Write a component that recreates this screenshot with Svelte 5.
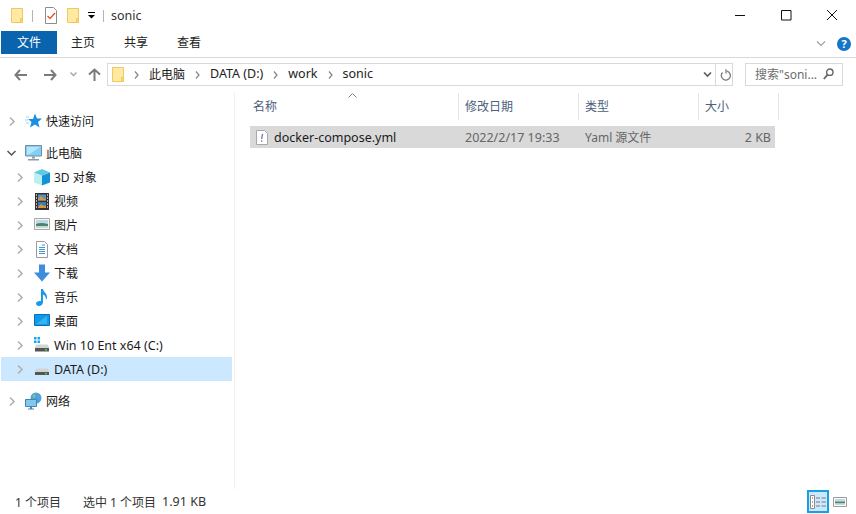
<script>
  const tabs = ['主页', '共享', '查看'];
  const crumbs = [
    { text: '此电脑', cjk: true },
    { text: 'DATA (D:)' },
    { text: 'work' },
    { text: 'sonic' }
  ];
  const places = [
    { label: '3D 对象', icon: 'cube', cjk: true },
    { label: '视频', icon: 'film', cjk: true },
    { label: '图片', icon: 'picture', cjk: true },
    { label: '文档', icon: 'doc', cjk: true },
    { label: '下载', icon: 'down', cjk: true },
    { label: '音乐', icon: 'music', cjk: true },
    { label: '桌面', icon: 'desk', cjk: true },
    { label: 'Win 10 Ent x64 (C:)', icon: 'win' },
    { label: 'DATA (D:)', icon: 'drive', selected: true }
  ];
  const columns = [
    { label: '名称', width: 209 },
    { label: '修改日期', width: 120 },
    { label: '类型', width: 120 },
    { label: '大小', width: 80 }
  ];
</script>

{#snippet folder()}
  <svg class="folder" width="14" height="17" viewBox="0 0 14 17">
    <path d="M1.500 1.500h11v14h-11z" fill="#ffe9a3" stroke="#eec95f" />
    <path d="M10.500 11.500h2v4h-2z" fill="#fbd873" stroke="#eec95f" />
  </svg>
{/snippet}

{#snippet chev()}
  <svg class="chev" width="7" height="11" viewBox="0 0 7 11">
    <path d="M1 1.500l4 4-4 4" fill="none" stroke="currentColor" stroke-width="1.600" />
  </svg>
{/snippet}

{#snippet navicon(kind)}
  <svg class="navicon" width="18" height="18" viewBox="0 0 18 18">
    {#if kind === 'cube'}
      <path d="M1 4.500L9 7.500v10L1 14.500z" fill="#bdeef2" />
      <path d="M9 7.500l8-3v10l-8 3z" fill="#1492d8" />
      <path d="M1 4.500L9 1l8 3.500-8 3z" fill="#5ccbe0" />
    {:else if kind === 'film'}
      <path d="M2 1h14v17H2z" fill="#333" />
      <path d="M5 2.500h8v6H5z" fill="#5a8fc4" />
      <path d="M5 10h8v6H5z" fill="#3f78b8" />
      <path d="M5 7l3-3 3 3 2-1v2.500H5zM5 15l3-3 3 2 2-1v3H5z" fill="#d39a45" />
      <path d="M3 3h1M3 6h1M3 9h1M3 12h1M3 15h1M14 3h1M14 6h1M14 9h1M14 12h1M14 15h1" stroke="#ddd" stroke-width="1.500" />
    {:else if kind === 'picture'}
      <path d="M1.500 2.500h15v11h-15z" fill="#f6f6f6" stroke="#a8a8a8" />
      <path d="M3 4h12v4H3z" fill="#bcd9ea" />
      <path d="M3 8c3-1.500 7-1.500 12 0v2H3z" fill="#4e8464" />
      <path d="M3 10h12v2H3z" fill="#c2d9e2" />
    {:else if kind === 'doc'}
      <path d="M3.500 1.500h8l3 3v13h-11z" fill="#fff" stroke="#9a9a9a" />
      <path d="M9 5h3M6 7.500h6M6 9.500h6M6 11.500h6M6 13.500h6" stroke="#3c9ad8" />
    {:else if kind === 'down'}
      <path d="M6 .5h6v8h5l-8 9-8-9h5z" fill="#3c8ddc" />
    {:else if kind === 'music'}
      <path d="M8 1h2c.3 3 4 4 4 8 0 1-.4 2-1 3 0-3-1-4.500-3-5.500v7.500c0 2.500-2 4-4 4s-3-1-3-2.500 2-3 5-2.500z" fill="#1c97ea" />
    {:else if kind === 'desk'}
      <path d="M1.500 2.500h15v11h-15z" fill="#0f9ae8" stroke="#0b6ec0" />
      <path d="M3 12l11-8v8z" fill="#36b4f2" />
    {:else if kind === 'win'}
      <path d="M1 1h2.500v2.500H1zM4.500 1H7v2.500H4.500zM1 4.500h2.500V7H1zM4.500 4.500H7V7H4.500z" fill="#14a8ef" />
      <path d="M2 12c.3-2.500 1-3.500 2-3.500h10c1 0 1.700 1 2 3.500z" fill="#d4d4d4" />
      <path d="M2 12h14v3.500H2z" fill="#555" />
      <path d="M12 13h2v1.500h-2z" fill="#41d36b" />
    {:else if kind === 'drive'}
      <path d="M2 12c.3-2.500 1-3.500 2-3.500h10c1 0 1.700 1 2 3.500z" fill="#cfd3d6" />
      <path d="M2 12h14v3H2z" fill="#555" />
      <path d="M12 13h2v1.200h-2z" fill="#41d36b" />
    {/if}
  </svg>
{/snippet}

<div class="win">
  <header class="title">
    {@render folder()}
    <i class="bar"></i>
    <svg class="qa-doc" width="14" height="17" viewBox="0 0 14 17">
      <path d="M1.500.500h8l3 3v13h-11z" fill="#fff" stroke="#8d8d8d" />
      <path d="M3.500 9l2.500 2.500L11 6" fill="none" stroke="#e2572b" stroke-width="1.400" />
    </svg>
    <span class="qa-folder">{@render folder()}</span>
    <svg class="qa-drop" width="7" height="7" viewBox="0 0 7 7">
      <path d="M0 .5h7" stroke="#000" />
      <path d="M0 3h7L3.500 6.500z" fill="#000" />
    </svg>
    <i class="bar second"></i>
    <span class="title-text">sonic</span>
    <div class="controls">
      <button aria-label="最小化"><svg width="12" height="12" viewBox="0 0 12 12"><path d="M1 6.500h10" stroke="#111" /></svg></button>
      <button aria-label="最大化"><svg width="12" height="12" viewBox="0 0 12 12"><path d="M1.500 1.500h9.500v9.500H1.500z" fill="none" stroke="#111" /></svg></button>
      <button aria-label="关闭"><svg width="12" height="12" viewBox="0 0 12 12"><path d="M1 1l10 10M11 1L1 11" stroke="#111" /></svg></button>
    </div>
  </header>

  <nav class="ribbon">
    <span class="tab tab-file">文件</span>
    {#each tabs as t}<span class="tab">{t}</span>{/each}
    <svg class="collapse" width="10" height="6" viewBox="0 0 10 6"><path d="M1 .5l4 4 4-4" fill="none" stroke="#a0a0a0" stroke-width="1.200" /></svg>
    <span class="help">?</span>
  </nav>

  <div class="addr">
    <svg class="nav-arrow" width="13" height="12" viewBox="0 0 13 12"><path d="M6 1L1.500 6 6 11M1.500 6H13" fill="none" stroke="#7b7b7b" stroke-width="2" /></svg>
    <svg class="nav-arrow fwd" width="13" height="12" viewBox="0 0 13 12"><path d="M7 1l4.500 5L7 11M11.500 6H0" fill="none" stroke="#7b7b7b" stroke-width="2" /></svg>
    <svg class="recent" width="7" height="5" viewBox="0 0 7 5"><path d="M.5.500l3 3 3-3" fill="none" stroke="#a6a6a6" stroke-width="1.400" /></svg>
    <svg class="up" width="13" height="13" viewBox="0 0 13 13"><path d="M1 6.500l5.500-5 5.500 5M6.500 1.500V13" fill="none" stroke="#7b7b7b" stroke-width="2" /></svg>
    <div class="path">
      {@render folder()}
      {#each crumbs as c}
        <svg class="crumb-chev" width="5" height="8" viewBox="0 0 5 8"><path d="M1 .5l3 3.500-3 3.500" fill="none" stroke="#8a8a8a" stroke-width="1.300" /></svg>
        <span class="crumb" class:latin={!c.cjk}>{c.text}</span>
      {/each}
      <svg class="path-drop" width="9" height="6" viewBox="0 0 9 6"><path d="M1 .5l3.500 3.500L8 .5" fill="none" stroke="#5d5d5d" stroke-width="1.600" /></svg>
      <span class="refresh">
        <svg width="11" height="12" viewBox="0 0 11 12"><path d="M7 2.200A4.500 4.500 0 1 1 2.500 3.500M6 .2v4.300" fill="none" stroke="#7c7c7c" stroke-width="1.300" /></svg>
      </span>
    </div>
    <div class="search">
      <span>搜索"soni...</span>
      <svg width="11" height="12" viewBox="0 0 11 12"><circle cx="6.800" cy="4.200" r="3.200" fill="none" stroke="#666" stroke-width="1.400" /><path d="M4.500 6.800L.8 11" stroke="#666" stroke-width="1.800" /></svg>
    </div>
  </div>

  <div class="main">
    <aside class="side">
      <div class="row top">
        {@render chev()}
        <svg class="navicon" width="18" height="18" viewBox="0 0 18 18"><path d="M10 1.500l2 5h5l-4 3.500 1.500 5.500-4.500-3-5 3 1.500-5.500L3 7h5z" fill="#1b8fdf" /><path d="M1 5h3M0 8h3M1 11h3" stroke="#9fd0ef" /></svg>
        <span>快速访问</span>
      </div>
      <div class="row top pc">
        <svg class="chev open" width="9" height="7" viewBox="0 0 9 7"><path d="M.5 1l4 4 4-4" fill="none" stroke="#555" stroke-width="1.500" /></svg>
        <svg class="navicon" width="18" height="18" viewBox="0 0 18 18"><path d="M.5 1.500h16v10.500H.5z" fill="#7fd0f8" stroke="#7a8b99" /><path d="M2 3h13L4 10.500H2z" fill="#b5e5fb" /><path d="M7 12.500h3v2H7zM3 15h11v1.500H3z" fill="#8a9aa8" /></svg>
        <span>此电脑</span>
      </div>
      {#each places as p}
        <div class="row sub" class:sel={p.selected}>
          {@render chev()}
          {@render navicon(p.icon)}
          <span class:latin={!p.cjk}>{p.label}</span>
        </div>
      {/each}
      <div class="row top net">
        {@render chev()}
        <svg class="navicon" width="18" height="18" viewBox="0 0 18 18"><circle cx="11" cy="6" r="5.500" fill="#4fa3dc" /><path d="M8 3c2-1 3 1 2 2s-3 1-2-2z" fill="#90c67a" /><path d="M.5 7.500h11v7H.5z" fill="#86c7ec" stroke="#3d86bd" /><path d="M5 15h2v1.500H5zM3 16.500h6V17.500H3z" fill="#4d87ad" /></svg>
        <span>网络</span>
      </div>
    </aside>

    <section class="list">
      <span class="sort">
        <svg width="9" height="5" viewBox="0 0 9 5"><path d="M.5 4.500l4-4 4 4" fill="none" stroke="#8a8a8a" /></svg>
      </span>
      <div class="head">
        {#each columns as c}
          <div class="col" style="width: {c.width}px">{c.label}</div>
        {/each}
      </div>
      <div class="item">
        <span class="c-name latin">
          <svg width="12" height="15" viewBox="0 0 12 15"><path d="M.5.500h8l3 3v11H.5z" fill="#fff" stroke="#a8a8a8" /><path d="M6.500 4l-.8 5" stroke="#8a66b8" stroke-width="1.300" /><path d="M5 11h1.200" stroke="#8a66b8" stroke-width="1.300" /></svg>
          docker-compose.yml
        </span>
        <span class="c-date latin">2022/2/17 19:33</span>
        <span class="c-type">Yaml 源文件</span>
        <span class="c-size latin">2 KB</span>
      </div>
    </section>
  </div>

  <footer class="status">
    <span class="count">1 个项目</span>
    <span>选中 1 个项目</span>
    <span class="size latin">1.91 KB</span>
    <div class="views">
      <span class="view on">
        <svg width="16" height="14" viewBox="0 0 16 14"><path d="M.5.500h4v13h-4z" fill="#fff" stroke="#8a8a8a" /><path d="M2 2.500h1v1H2zM2 6.500h1v1H2zM2 10.500h1v1H2z" fill="#a33" /><path d="M6 3h4M11.500 3H16M6 7h4M11.500 7H16M6 11h4M11.500 11H16" stroke="#7d7d7d" /></svg>
      </span>
      <span class="view">
        <svg width="14" height="10" viewBox="0 0 14 10"><path d="M.5.500h13v9H.5z" fill="#fff" stroke="#9b9b9b" /><path d="M2 2h10v2.500H2z" fill="#bcd9ea" /><path d="M2 4.500h10v2H2z" fill="#4e8464" /><path d="M2 6.500h10V8H2z" fill="#c2d9e2" /></svg>
      </span>
    </div>
  </footer>
</div>

<style>
  :global(body) {
    margin: 0;
    background: #fff;
  }
  .win {
    width: 856px;
    height: 514px;
    display: flex;
    flex-direction: column;
    overflow: hidden;
    background: #fff;
    color: #1a1a1a;
    font: 12px "Noto Sans", "Noto Sans CJK SC", sans-serif;
  }
  .latin {
    font-size: 12.5px;
  }
  svg {
    display: block;
    flex: none;
  }
  .title {
    height: 31px;
    display: flex;
    align-items: center;
    padding-left: 10px;
  }
  .bar {
    width: 1px;
    height: 12px;
    background: #b4b4b4;
    margin-left: 8px;
  }
  .qa-doc {
    margin-left: 11px;
  }
  .qa-folder {
    margin-left: 8px;
  }
  .qa-drop {
    margin-left: 8px;
  }
  .bar.second {
    margin-left: 8px;
  }
  .title-text {
    margin-left: 7px;
    font-size: 12.5px;
    color: #333;
  }
  .controls {
    margin-left: auto;
    display: flex;
    padding-right: 1px;
    align-self: flex-start;
    padding-top: 3px;
  }
  .controls button {
    width: 46px;
    height: 24px;
    padding: 0;
    border: 0;
    background: none;
    display: flex;
    align-items: center;
    justify-content: center;
  }
  .ribbon {
    height: 27px;
    box-sizing: border-box;
    display: flex;
    align-items: flex-start;
    gap: 1px;
    padding-left: 1px;
    border-bottom: 1px solid #d9d9d9;
  }
  .tab {
    height: 23px;
    line-height: 24px;
    padding: 0 14px;
    color: #222;
  }
  .tab-file {
    width: 56px;
    box-sizing: border-box;
    margin-right: -1px;
    padding: 0;
    text-align: center;
    background: #0a63ad;
    color: #fff;
  }
  .collapse {
    margin: 10px 0 0 auto;
  }
  .help {
    width: 14px;
    height: 14px;
    margin: 6px 5px 0 10px;
    border-radius: 50%;
    background: #1575c6;
    color: #fff;
    font-size: 11px;
    font-weight: 700;
    line-height: 14px;
    text-align: center;
  }
  .addr {
    height: 34px;
    box-sizing: border-box;
    display: flex;
    align-items: center;
    padding: 0 0 1px 14px;
  }
  .nav-arrow.fwd {
    margin-left: 17px;
  }
  .recent {
    margin-left: 13px;
  }
  .up {
    margin-left: 11px;
  }
  .path {
    width: 626px;
    height: 23px;
    box-sizing: border-box;
    margin-left: 6px;
    padding-left: 3px;
    border: 1px solid #d9d9d9;
    display: flex;
    align-items: center;
  }
  .crumb-chev {
    margin: 0 10px 0 10px;
  }
  .path > .folder + .crumb-chev {
    margin-left: 9px;
  }
  .crumb {
    color: #222;
    margin-bottom: 2px;
  }
  .path-drop {
    margin-left: auto;
  }
  .refresh {
    width: 17px;
    height: 100%;
    box-sizing: border-box;
    margin-left: 3px;
    padding-left: 4px;
    border-left: 1px solid #d9d9d9;
    display: flex;
    align-items: center;
  }
  .search {
    width: 98px;
    height: 23px;
    box-sizing: border-box;
    margin-left: 12px;
    padding: 0 8px 2px 9px;
    border: 1px solid #d9d9d9;
    display: flex;
    align-items: center;
    justify-content: space-between;
    color: #6d6d6d;
    white-space: nowrap;
  }
  .main {
    flex: 1;
    display: flex;
    min-height: 0;
  }
  .side {
    width: 235px;
    box-sizing: border-box;
    padding: 17px 2px 0 1px;
    border-right: 1px solid #f0f0f0;
    flex: none;
  }
  .row {
    height: 24px;
    display: flex;
    align-items: center;
    color: #1a1a1a;
  }
  .row span {
    white-space: nowrap;
  }
  .row.top {
    padding-left: 8px;
  }
  .row.top .chev {
    color: #b0b0b0;
  }
  .row.top .navicon {
    margin: 0 3px 0 9px;
  }
  .row.pc {
    margin-top: 8px;
    padding-left: 6px;
  }
  .row.pc .navicon {
    margin-left: 9px;
  }
  .row.net {
    margin-top: 8px;
  }
  .row.sub {
    padding-left: 16px;
  }
  .row.sub .chev {
    color: #b0b0b0;
  }
  .row.sub .navicon {
    margin: 0 3px 0 9px;
  }
  .row.sel {
    background: #cce8ff;
  }
  .list {
    position: relative;
    flex: 1;
    min-width: 0;
    padding: 1px 0 0 15px;
  }
  .sort {
    position: absolute;
    left: 113px;
    top: 1px;
  }
  .head {
    height: 27px;
    display: flex;
  }
  .col {
    box-sizing: border-box;
    height: 100%;
    padding: 4px 0 0 6px;
    line-height: 20px;
    color: #4c607a;
    border-right: 1px solid #e5e5e5;
  }
  .col:first-child {
    padding-left: 3px;
  }
  .item {
    width: 525px;
    height: 22px;
    margin-top: 6px;
    display: flex;
    align-items: center;
    background: #d9d9d9;
    color: #666;
  }
  .c-name {
    width: 215px;
    box-sizing: border-box;
    padding-left: 6px;
    display: flex;
    align-items: center;
    gap: 6px;
    color: #1a1a1a;
  }
  .c-date {
    width: 120px;
  }
  .c-type {
    flex: 1;
  }
  .c-size {
    padding-right: 4px;
  }
  .status {
    height: 25px;
    display: flex;
    align-items: center;
    padding-left: 15px;
    color: #333;
  }
  .count {
    margin-right: 22px;
  }
  .size {
    margin-left: 6px;
  }
  .views {
    margin-left: auto;
    display: flex;
    align-items: center;
    padding-right: 8px;
    gap: 3px;
  }
  .view {
    width: 16px;
    height: 23px;
    box-sizing: border-box;
    display: flex;
    align-items: center;
    justify-content: center;
  }
  .view.on {
    width: 22px;
    background: #cce8ff;
    border: 2px solid #1a9fe0;
  }
</style>
